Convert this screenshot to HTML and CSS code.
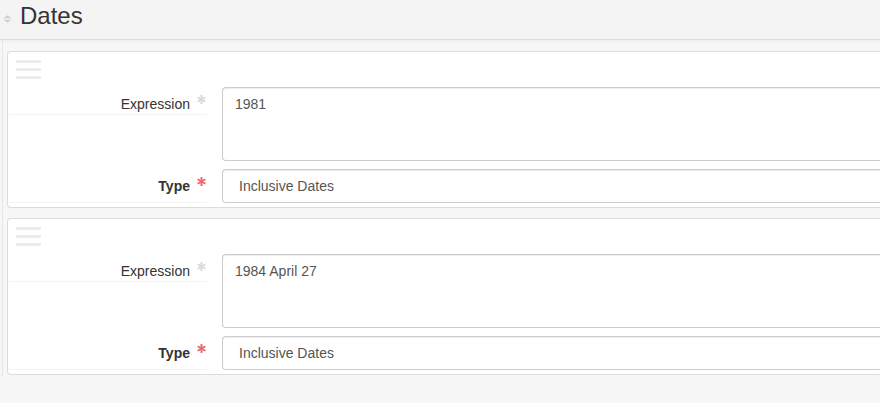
FILE: index.html
```html
<!DOCTYPE html>
<html lang="en">
<head>
<meta charset="utf-8">
<title>Dates</title>
<link rel="stylesheet" href="styles.css">
</head>
<body>
<header class="section-header">
  <span class="collapse-icon">
    <svg width="9" height="8" viewBox="0 0 9 8"><path d="M0.5 3.2 L4.5 0.3 L8.5 3.2 Z M0.5 4.8 L4.5 7.7 L8.5 4.8 Z" fill="#cfcfcf"/></svg>
  </span>
  <h2 class="section-title">Dates</h2>
</header>
<main class="subrecords">
  <section class="card">
    <div class="drag-handle"><i></i><i></i><i></i></div>
    <div class="form-row">
      <label class="control-label">Expression<span class="req req-cond"><svg width="9" height="9" viewBox="0 0 10 10"><g stroke="currentColor" stroke-width="2.2"><line x1="5" y1="0" x2="5" y2="10"/><line x1="0.7" y1="2.5" x2="9.3" y2="7.5"/><line x1="0.7" y1="7.5" x2="9.3" y2="2.5"/></g></svg></span></label>
      <div class="control"><div class="textarea">1981</div></div>
    </div>
    <div class="form-row">
      <label class="control-label bold">Type<span class="req req-must"><svg width="9" height="9" viewBox="0 0 10 10"><g stroke="currentColor" stroke-width="2.2"><line x1="5" y1="0" x2="5" y2="10"/><line x1="0.7" y1="2.5" x2="9.3" y2="7.5"/><line x1="0.7" y1="7.5" x2="9.3" y2="2.5"/></g></svg></span></label>
      <div class="control"><div class="select">Inclusive Dates</div></div>
    </div>
  </section>
  <section class="card">
    <div class="drag-handle"><i></i><i></i><i></i></div>
    <div class="form-row">
      <label class="control-label">Expression<span class="req req-cond"><svg width="9" height="9" viewBox="0 0 10 10"><g stroke="currentColor" stroke-width="2.2"><line x1="5" y1="0" x2="5" y2="10"/><line x1="0.7" y1="2.5" x2="9.3" y2="7.5"/><line x1="0.7" y1="7.5" x2="9.3" y2="2.5"/></g></svg></span></label>
      <div class="control"><div class="textarea">1984 April 27</div></div>
    </div>
    <div class="form-row">
      <label class="control-label bold">Type<span class="req req-must"><svg width="9" height="9" viewBox="0 0 10 10"><g stroke="currentColor" stroke-width="2.2"><line x1="5" y1="0" x2="5" y2="10"/><line x1="0.7" y1="2.5" x2="9.3" y2="7.5"/><line x1="0.7" y1="7.5" x2="9.3" y2="2.5"/></g></svg></span></label>
      <div class="control"><div class="select">Inclusive Dates</div></div>
    </div>
  </section>
</main>
</body>
</html>
```
FILE: styles.css
```css
html, body {
  margin: 0;
  padding: 0;
  overflow: hidden;
}
body {
  background: #f7f7f7;
  font-family: "Liberation Sans", Arial, Helvetica, sans-serif;
  font-size: 14px;
  line-height: 20px;
  color: #333;
}
.section-header {
  height: 40px;
  box-sizing: border-box;
  background: #f4f4f4;
  border-bottom: 1px solid #dcdcdc;
  display: flex;
  align-items: flex-start;
  padding-left: 3px;
  box-shadow: 0 2px 3px rgba(0,0,0,0.03);
}
.collapse-icon {
  display: block;
  width: 9px;
  height: 8px;
  margin-top: 15px;
}
.collapse-icon svg { display: block; }
.section-title {
  margin: 0 0 0 8px;
  padding-top: 3px;
  font-size: 24px;
  line-height: 26px;
  font-weight: normal;
  color: #333;
}
.subrecords {
  margin-left: 2px;
  border-left: 1px solid #e6e6e6;
  padding: 11px 0 2px 4px;
  display: flex;
  flex-direction: column;
  gap: 10px;
}
.card {
  background: #fff;
  border: 1px solid #dcdcdc;
  border-right: none;
  border-radius: 4px 0 0 4px;
  box-sizing: border-box;
  height: 157px;
  padding: 0 0 4px 1px;
}
.drag-handle {
  height: 35px;
  box-sizing: border-box;
  padding: 8px 0 0 7px;
  display: flex;
  flex-direction: column;
  gap: 5px;
}
.drag-handle i {
  display: block;
  width: 25px;
  height: 3px;
  background: #ececec;
}
.form-row {
  display: flex;
  align-items: flex-start;
}
.form-row + .form-row {
  margin-top: 8px;
}
.control-label {
  width: 198px;
  box-sizing: border-box;
  padding: 7px 1px 0 0;
  text-align: right;
  border-bottom: 1px solid #f4f4f4;
  height: 28px;
  color: #333;
}
.control-label.bold {
  font-weight: bold;
  height: 34px;
}
.req {
  display: inline-block;
  width: 9px;
  height: 9px;
  margin-left: 7px;
  position: relative;
  top: -5px;
  vertical-align: baseline;
}
.req svg { display: block; }
.req-cond { color: #d9d9d9; }
.req-must { color: #ea6b6f; }
.control {
  flex: 1;
  padding-left: 15px;
}
.textarea, .select {
  border: 1px solid #ccc;
  border-right: none;
  border-radius: 4px 0 0 4px;
  box-sizing: border-box;
  color: #555;
  background: #fff;
  box-shadow: inset 0 1px 1px rgba(0,0,0,0.075);
}
.textarea {
  height: 74px;
  padding: 6px 12px;
}
.select {
  height: 34px;
  padding: 6px 16px;
}
```
